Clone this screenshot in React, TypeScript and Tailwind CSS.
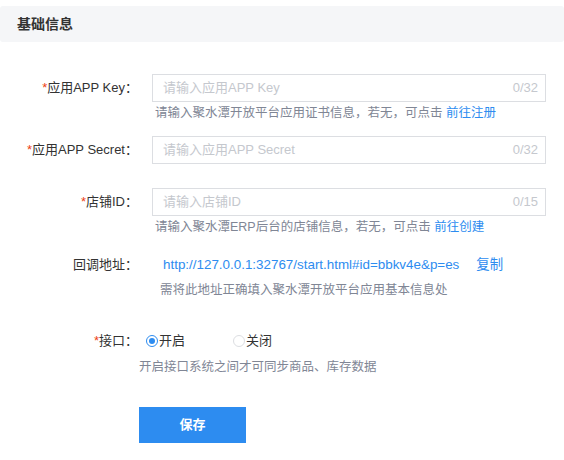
import React from "react";

const font = "font-['Liberation_Sans','Noto_Sans_CJK_SC',sans-serif]";

function Label({ text, required }: { text: string; required?: boolean }) {
  return (
    <div className="w-[138px] shrink-0 text-right text-[13px] text-[#333] leading-[22px]">
      {required && <span className="text-[#ed4014]">*</span>}
      {text}：
    </div>
  );
}

function TextField({ placeholder, max }: { placeholder: string; max: number }) {
  return (
    <div className="ml-[14px] flex h-7 w-[394px] items-center justify-between border border-[#dcdee2] bg-white pl-[10px] pr-[7px] text-[13px]">
      <span className="text-[#c5c8ce]">{placeholder}</span>
      <span className="text-[#c5c8ce]">0/{max}</span>
    </div>
  );
}

function Radio({ checked, label }: { checked?: boolean; label: string }) {
  return (
    <label className="flex items-center text-[13px] text-[#333]">
      <span
        className={
          checked
            ? "mr-[1px] flex h-3 w-3 items-center justify-center rounded-full border border-[#2d8cf0] bg-white"
            : "mr-[1px] h-3 w-3 rounded-full border border-[#dcdee2] bg-white"
        }
      >
        {checked && <span className="h-[6px] w-[6px] rounded-full bg-[#2d8cf0]" />}
      </span>
      {label}
    </label>
  );
}

export default function App() {
  return (
    <div className={`h-[460px] w-[564px] overflow-hidden bg-white pt-[6px] ${font}`}>
      {/* Section header */}
      <div className="flex h-9 items-center rounded-[3px] bg-[#f5f6f8] pl-[17px] text-[14px] font-bold text-[#333]">
        基础信息
      </div>

      <div className="pt-8">
        {/* APP Key */}
        <div className="flex items-center">
          <Label text="应用APP Key" required />
          <TextField placeholder="请输入应用APP Key" max={32} />
        </div>
        <div className="pl-[155px] text-[12.5px] leading-[22px] text-[#808695]">
          请输入聚水潭开放平台应用证书信息，若无，可点击{" "}
          <a className="text-[#2d8cf0]">前往注册</a>
        </div>

        {/* APP Secret */}
        <div className="mt-3 flex items-center">
          <Label text="应用APP Secret" required />
          <TextField placeholder="请输入应用APP Secret" max={32} />
        </div>

        {/* Shop ID */}
        <div className="mt-6 flex items-center">
          <Label text="店铺ID" required />
          <TextField placeholder="请输入店铺ID" max={15} />
        </div>
        <div className="pl-[155px] text-[12.5px] leading-[22px] text-[#808695]">
          请输入聚水潭ERP后台的店铺信息，若无，可点击{" "}
          <a className="text-[#2d8cf0]">前往创建</a>
        </div>

        {/* Callback */}
        <div className="mt-4 flex items-center">
          <Label text="回调地址" />
          <div className="ml-[25px] flex text-[13.4px] leading-[22px]">
            <span className="text-[#2d8cf0]">http://127.0.0.1:32767/start.html#id=bbkv4e&amp;p=es</span>
            <a className="ml-[17px] text-[#2d8cf0]">复制</a>
          </div>
        </div>
        <div className="mt-[3px] pl-[160px] text-[12.5px] leading-[22px] text-[#808695]">
          需将此地址正确填入聚水潭开放平台应用基本信息处
        </div>

        {/* Interface switch */}
        <div className="mt-[29px] flex items-center">
          <Label text="接口" required />
          <div className="ml-[8px] flex items-center gap-[48px]">
            <Radio checked label="开启" />
            <Radio label="关闭" />
          </div>
        </div>
        <div className="mt-[4px] pl-[139px] text-[12.5px] leading-[22px] text-[#808695]">
          开启接口系统之间才可同步商品、库存数据
        </div>

        <div className="mt-[29px] pl-[139px]">
          <button className="h-9 w-[107px] bg-[#2d8cf0] text-[13px] font-bold text-white">
            保存
          </button>
        </div>
      </div>
    </div>
  );
}
